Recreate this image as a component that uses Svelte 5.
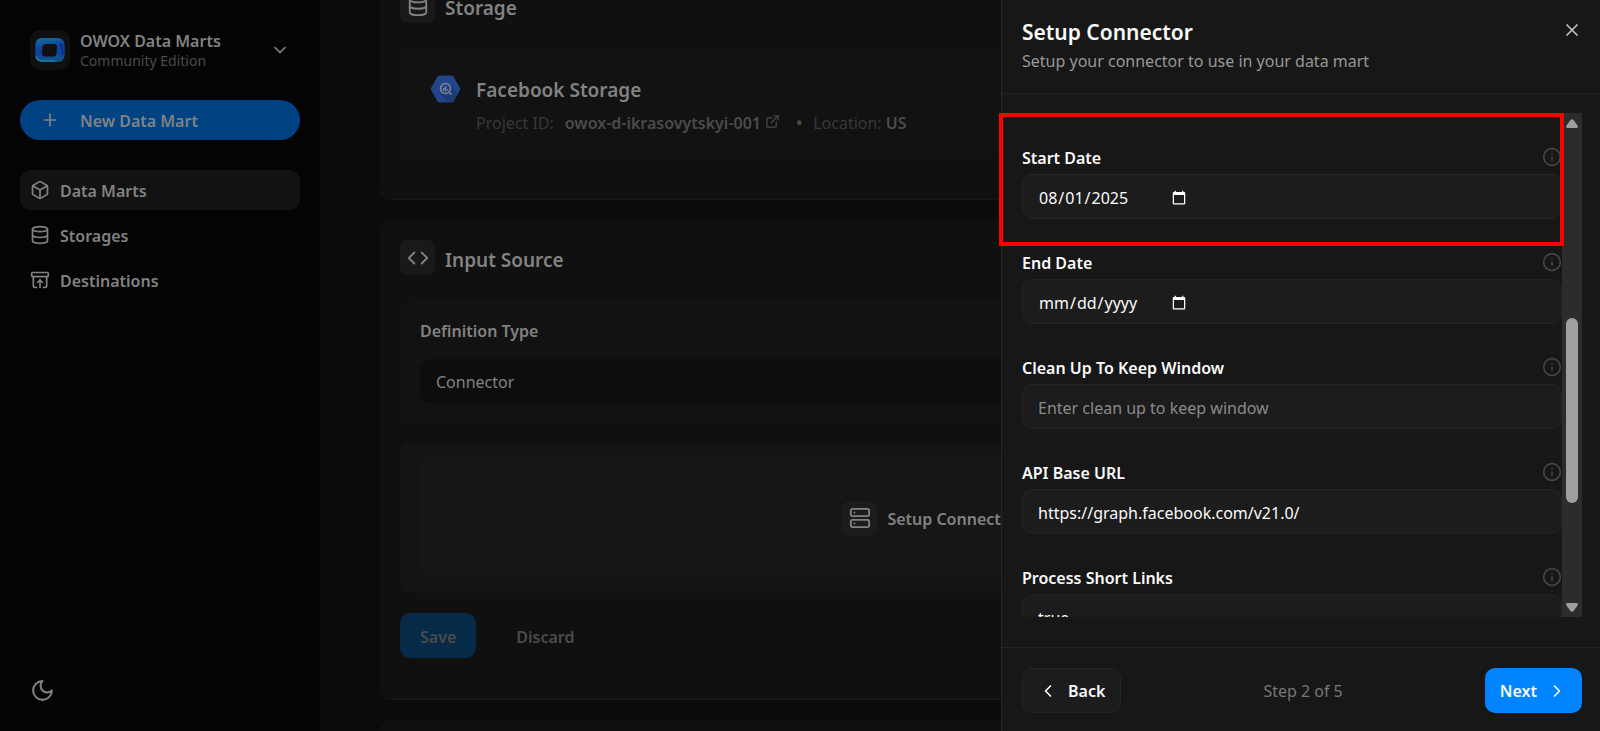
<script lang="ts">

    const icons = {
        box: [
            'M21 8a2 2 0 0 0-1-1.73l-7-4a2 2 0 0 0-2 0l-7 4A2 2 0 0 0 3 8v8a2 2 0 0 0 1 1.73l7 4a2 2 0 0 0 2 0l7-4A2 2 0 0 0 21 16Z',
            'm3.3 7 8.7 5 8.7-5',
            'M12 22V12'
        ],
        database: [
            'M3 5a9 3 0 1 0 18 0a9 3 0 1 0-18 0',
            'M3 5v14a9 3 0 0 0 18 0V5',
            'M3 12a9 3 0 0 0 18 0'
        ],
        archive: [
            'M3 3h18a1 1 0 0 1 1 1v3a1 1 0 0 1-1 1H3a1 1 0 0 1-1-1V4a1 1 0 0 1 1-1Z',
            'M4 8v11a2 2 0 0 0 2 2h2',
            'M20 8v11a2 2 0 0 1-2 2h-2',
            'm9 15 3-3 3 3',
            'M12 12v9'
        ],
        code: ['m16 18 6-6-6-6', 'm8 6-6 6 6 6'],
        server: [
            'M4 2h16a2 2 0 0 1 2 2v4a2 2 0 0 1-2 2H4a2 2 0 0 1-2-2V4a2 2 0 0 1 2-2Z',
            'M4 14h16a2 2 0 0 1 2 2v4a2 2 0 0 1-2 2H4a2 2 0 0 1-2-2v-4a2 2 0 0 1 2-2Z',
            'M6 6h.01',
            'M6 18h.01'
        ],
        external: ['M15 3h6v6', 'M10 14 21 3', 'M18 13v6a2 2 0 0 1-2 2H5a2 2 0 0 1-2-2V8a2 2 0 0 1 2-2h6'],
        info: ['M2 12a10 10 0 1 0 20 0a10 10 0 1 0-20 0', 'M12 16v-4', 'M12 8h.01'],
        moon: ['M12 3a6 6 0 0 0 9 9 9 9 0 1 1-9-9Z'],
        plus: ['M5 12h14', 'M12 5v14'],
        close: ['M18 6 6 18', 'm6 6 12 12'],
        down: ['m6 9 6 6 6-6'],
        left: ['m15 18-6-6 6-6'],
        right: ['m9 18 6-6-6-6']
    };

    const navItems = [
        { label: 'Data Marts', icon: 'box', active: true },
        { label: 'Storages', icon: 'database', active: false },
        { label: 'Destinations', icon: 'archive', active: false }
    ];

    let fields = $state([
        { id: 'start-date', label: 'Start Date', type: 'date', value: '2025-08-01', placeholder: '' },
        { id: 'end-date', label: 'End Date', type: 'date', value: '', placeholder: '' },
        { id: 'clean-up', label: 'Clean Up To Keep Window', type: 'text', value: '', placeholder: 'Enter clean up to keep window' },
        { id: 'api-url', label: 'API Base URL', type: 'text', value: 'https://graph.facebook.com/v21.0/', placeholder: '' },
        { id: 'short-links', label: 'Process Short Links', type: 'text', value: 'true', placeholder: '' }
    ]);

</script>

{#snippet icon(name: string, size: number)}
    <svg width={size} height={size} viewBox="0 0 24 24" fill="none" stroke="currentColor" stroke-width="2"
         stroke-linecap="round" stroke-linejoin="round" aria-hidden="true">
        {#each icons[name] as d}
            <path {d} />
        {/each}
    </svg>
{/snippet}

<div class="app">

    <aside class="sidebar">
        <button class="workspace">
            <span class="logo">
                <svg width="30" height="24" viewBox="0 0 30 24" aria-hidden="true">
                    <defs>
                        <linearGradient id="logo-fill" x1="0" y1="0" x2="0.2" y2="1">
                            <stop offset="0" stop-color="#11749a" />
                            <stop offset="0.5" stop-color="#0d3f9c" />
                            <stop offset="1" stop-color="#174f8c" />
                        </linearGradient>
                    </defs>
                    <path fill="url(#logo-fill)" fill-rule="evenodd"
                          d="M7 0Q15-0.5 23 0Q29 0.5 29.5 6Q30 12 29.5 18Q29 23.500 23 24Q15 24.500 7 24Q1 23.500 0.500 18Q0 12 0.500 6Q1 0.500 7 0ZM11 6Q8 6 7.500 9L7 15Q7 18.500 10 18.500H18Q21 18.500 21.500 15L22 9Q22 6 19 6Z" />
                    <path d="M1 18Q2 23 8 23H20" fill="none" stroke="#1580a0" stroke-width="1.500" />
                    <path d="M26 5Q27 12 28 17" fill="none" stroke="#0b2ba0" stroke-width="2" />
                </svg>
            </span>
            <span class="workspace-text">
                <strong>OWOX Data Marts</strong>
                <span>Community Edition</span>
            </span>
            {@render icon('down', 20)}
        </button>

        <button class="new-mart">
            {@render icon('plus', 20)}
            <span class="text">New Data Mart</span>
        </button>

        <nav>
            {#each navItems as item}
                <a href="#{item.icon}" class:active={item.active}>
                    {@render icon(item.icon, 20)}
                    <span class="text">{item.label}</span>
                </a>
            {/each}
        </nav>

        <button class="theme" aria-label="Toggle theme">{@render icon('moon', 25)}</button>
    </aside>

    <main>
        <section class="card">
            <h2><span class="tile">{@render icon('database', 22)}</span><span class="title">Storage</span></h2>
            <div class="panel storage">
                <svg width="31" height="28" viewBox="0 0 31 28" aria-hidden="true">
                    <path d="M9 0.500H22Q23 0.500 23.500 1.500L30 13Q30.500 14 30 15L23.500 26.500Q23 27.500 22 27.500H9Q8 27.500 7.500 26.500L1 15Q0.500 14 1 13L7.500 1.500Q8 0.500 9 0.500Z" fill="#214587" />
                    <path d="m20 10 7.500 9-4 8H18l-7-7Z" fill="#1c3a73" />
                    <circle cx="15.500" cy="13.500" r="5" fill="none" stroke="#7b8798" stroke-width="1.500" />
                    <path d="M13.500 13v2.500M15.500 11.500v5M17.500 14v1.500M19.500 17.500l2 2" stroke="#7b8798" stroke-width="1.500" />
                </svg>
                <div>
                    <h3>Facebook Storage</h3>
                    <p>
                        <span>Project ID:</span>
                        <a href="#project">owox-d-ikrasovytskyi-001 {@render icon('external', 15)}</a>
                        <b>•</b>
                        <span>Location: <strong>US</strong></span>
                    </p>
                </div>
            </div>
        </section>

        <section class="card">
            <h2><span class="tile">{@render icon('code', 22)}</span><span class="title">Input Source</span></h2>
            <div class="panel definition">
                <label for="definition-type">Definition Type</label>
                <select id="definition-type">
                    <option>Connector</option>
                </select>
            </div>
            <div class="panel connector">
                <button class="setup">
                    <span class="tile">{@render icon('server', 22)}</span>
                    <span class="text">Setup Connector</span>
                </button>
            </div>
            <div class="actions">
                <button class="save"><span class="text">Save</span></button>
                <button class="discard"><span class="text">Discard</span></button>
            </div>
        </section>

        <section class="card"></section>
    </main>

    <div class="drawer" role="dialog" aria-labelledby="drawer-title">
        <header>
            <div>
                <h1 id="drawer-title">Setup Connector</h1>
                <p>Setup your connector to use in your data mart</p>
            </div>
            <button class="close" aria-label="Close">{@render icon('close', 20)}</button>
        </header>

        <div class="drawer-body">
            <form>
                {#each fields as field (field.id)}
                    <div class="field">
                        <div class="field-head">
                            <label for={field.id}>{field.label}</label>
                            {@render icon('info', 20)}
                        </div>
                        {#if field.type === 'date'}
                            <input id={field.id} class="input date" type="date" bind:value={field.value}>
                        {:else}
                            <input id={field.id} class="input" type="text" placeholder={field.placeholder}
                                   bind:value={field.value}>
                        {/if}
                    </div>
                {/each}
            </form>
            <div class="scrollbar" aria-hidden="true">
                <svg width="12" height="9" viewBox="0 0 12 9"><path d="M4.500 1Q6-0.500 7.500 1L11.500 6.500Q12.500 9 10.500 9H1.500Q-0.500 9 0.500 6.500Z" /></svg>
                <div class="track"><div class="thumb"></div></div>
                <svg width="12" height="9" viewBox="0 0 12 9"><path d="M4.500 8Q6 9.500 7.500 8L11.500 2.500Q12.500 0 10.500 0H1.500Q-0.500 0 0.500 2.500Z" /></svg>
            </div>
            <div class="highlight"></div>
        </div>

        <footer>
            <button class="back">{@render icon('left', 20)}Back</button>
            <span>Step 2 of 5</span>
            <button class="next">Next{@render icon('right', 20)}</button>
        </footer>
    </div>

</div>


<style>

    :global(body) {
        margin: 0;
        background: #0b0b0b;
    }

    .app {
        --text: #828282;
        --muted: #4b4b4b;
        display: flex;
        height: 100vh;
        overflow: hidden;
        color: var(--text);
        font-family: "Noto Sans", "Segoe UI", sans-serif;
        font-size: 16px;
        line-height: 20px;
    }

    .app * {
        box-sizing: border-box;
    }

    h1, h2, h3, p {
        margin: 0;
    }

    button, input, select {
        font: inherit;
        color: inherit;
        border: none;
        background: none;
        padding: 0;
    }

    button {
        cursor: pointer;
    }

    a {
        color: inherit;
        text-decoration: none;
    }

    svg {
        flex: none;
    }

    strong, label {
        font-weight: 600;
    }

    .text {
        padding-top: 2px;
    }

    /* sidebar */

    .sidebar {
        flex: none;
        width: 320px;
        padding: 29px 20px 28px;
        background: #040404;
        display: flex;
        flex-direction: column;
    }

    .workspace {
        display: flex;
        align-items: center;
        gap: 10px;
        padding: 0 10px;
        text-align: left;
    }

    .logo {
        display: grid;
        place-items: center;
        width: 40px;
        height: 40px;
        border-radius: 10px;
        background: #101010;
    }

    .workspace-text {
        flex: 1;
        display: flex;
        flex-direction: column;
        padding-top: 2px;
    }

    .workspace-text span {
        font-size: 14px;
        color: var(--muted);
    }

    .new-mart {
        display: flex;
        align-items: center;
        gap: 20px;
        height: 40px;
        margin: 29px 0 30px;
        padding: 0 20px;
        border-radius: 20px;
        background: #004282;
        font-weight: 600;
    }

    nav {
        flex: 1;
        display: flex;
        flex-direction: column;
        gap: 5px;
    }

    nav a {
        display: flex;
        align-items: center;
        gap: 10px;
        height: 40px;
        padding: 0 10px;
        border-radius: 10px;
        font-weight: 600;
    }

    nav a.active {
        background: #121212;
    }

    .theme {
        align-self: flex-start;
        height: 25px;
        margin-left: 10px;
    }

    /* page */

    main {
        flex: 1;
        display: flex;
        flex-direction: column;
        gap: 20px;
        margin-top: -32px;
        padding: 0 120px 0 60px;
    }

    .card {
        flex: none;
        min-height: 80px;
        padding: 20px 20px 41px;
        border-radius: 10px;
        border-bottom: 1px solid #171717;
        background: #101010;
    }

    h2 {
        display: flex;
        align-items: center;
        gap: 10px;
        margin-bottom: 26px;
        font-size: 19px;
        font-weight: 600;
    }

    .title {
        padding-top: 5px;
    }

    .tile {
        display: grid;
        place-items: center;
        width: 35px;
        height: 35px;
        border-radius: 8px;
        background: #191919;
    }

    .panel {
        border-radius: 10px;
        background: #121212;
    }

    .storage {
        display: flex;
        gap: 15px;
        padding: 25px 30px 18px;
    }

    .storage > svg {
        margin-top: 1px;
    }

    h3 {
        line-height: 32px;
        font-size: 19px;
        font-weight: 600;
    }

    .storage p {
        display: flex;
        align-items: center;
        gap: 11px;
        line-height: 34px;
        color: #383838;
    }

    .storage a, .storage strong, .storage b {
        color: var(--muted);
        font-weight: 600;
    }

    .storage b {
        padding-left: 5px;
    }

    .definition {
        display: flex;
        flex-direction: column;
        gap: 18px;
        padding: 20px;
    }

    .definition select {
        appearance: none;
        height: 44px;
        padding: 2px 16px 0;
        border-radius: 10px;
        background: #0d0d0d;
    }

    .connector {
        margin: 20px 0;
        padding: 15px 20px;
        background: #141414;
    }

    .setup {
        display: flex;
        align-items: center;
        justify-content: center;
        gap: 10px;
        width: 100%;
        height: 120px;
        border-radius: 10px;
        background: #161616;
        font-weight: 600;
    }

    .setup .tile {
        background: #1c1c1c;
    }

    .actions {
        display: flex;
        gap: 20px;
    }

    .actions button {
        display: flex;
        align-items: center;
        height: 45px;
        padding: 0 20px;
        border-radius: 10px;
        font-weight: 600;
        color: var(--muted);
    }

    .actions .save {
        background: #082a49;
    }

    /* drawer */

    .drawer {
        position: fixed;
        inset: 0 0 0 auto;
        width: 599px;
        display: flex;
        flex-direction: column;
        border-left: 1px solid #262626;
        background: #171717;
        color: #fafafa;
    }

    header {
        display: flex;
        justify-content: space-between;
        align-items: flex-start;
        height: 94px;
        padding: 20px 18px 0 20px;
        border-bottom: 1px solid #222222;
    }

    h1 {
        font-size: 21px;
        line-height: 25px;
        font-weight: 600;
    }

    header p {
        line-height: 32px;
        color: #989898;
    }

    .close {
        height: 20px;
        color: #c4c4c4;
    }

    .drawer-body {
        position: relative;
        flex: 1;
        min-height: 0;
        display: flex;
        margin: 19px 18px 30px 20px;
    }

    form {
        flex: 1;
        overflow: hidden;
        display: flex;
        flex-direction: column;
        gap: 33px;
        padding-top: 34px;
    }

    .field {
        display: flex;
        flex-direction: column;
        gap: 7px;
    }

    .field-head {
        display: flex;
        align-items: center;
        justify-content: space-between;
        height: 20px;
    }

    .field-head label {
        padding-top: 2px;
    }

    .field-head :global(svg) {
        color: #454545;
    }

    .input {
        width: 100%;
        height: 45px;
        padding: 2px 15px 0;
        border: 1px solid #242424;
        border-radius: 10px;
        background: #1c1c1c;
        outline: none;
        color-scheme: dark;
    }

    .input::placeholder {
        color: #8a8a8a;
    }

    .date::-webkit-datetime-edit {
        flex: none;
    }

    .date::-webkit-calendar-picker-indicator {
        margin-left: 8px;
    }

    .scrollbar {
        flex: none;
        width: 20px;
        display: flex;
        flex-direction: column;
        align-items: center;
        padding: 6px 0 5px;
        background: #2c2c2c;
        fill: #9f9f9f;
    }

    .track {
        flex: 1;
        padding-top: 190px;
    }

    .thumb {
        width: 12px;
        height: 185px;
        border-radius: 6px;
        background: #9f9f9f;
    }

    .highlight {
        position: absolute;
        top: 0;
        left: -23px;
        right: 18px;
        height: 133px;
        border: 4px solid #ff0000;
        pointer-events: none;
    }

    footer {
        display: flex;
        align-items: center;
        justify-content: space-between;
        padding: 20px 18px 18px 20px;
        border-top: 1px solid #242424;
        color: #777777;
    }

    footer button {
        display: flex;
        align-items: center;
        height: 45px;
        padding: 0 15px;
        border-radius: 10px;
        font-weight: 600;
        color: #fafafa;
    }

    .back {
        gap: 10px;
        border: 1px solid #242424;
        background: #1c1c1c;
    }

    .next {
        gap: 10px;
        background: #0084ff;
    }

</style>
